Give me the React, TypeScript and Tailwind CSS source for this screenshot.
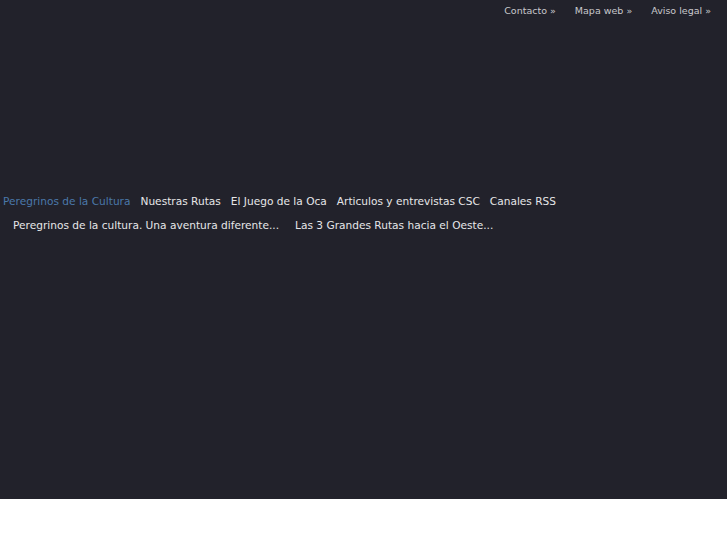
import React from "react";

export default function App() {
  const font = { fontFamily: '"DejaVu Sans", sans-serif' };
  return (
    <div className="w-[727px] h-[545px] bg-white" style={font}>
      <div className="h-[499px] bg-[#22222b] flex flex-col">
        <div className="flex justify-end gap-[19px] pr-[16px] pt-[5px] text-[9.5px] leading-[12px] text-[#c8c8cc]">
          <span>Contacto »</span>
          <span>Mapa web »</span>
          <span>Aviso legal »</span>
        </div>
        <div className="mt-[177px] flex pl-[3px] gap-[10px] text-[10.6px] leading-[14px] text-[#e6e6e8]">
          <span className="text-[#4a78aa]">Peregrinos de la Cultura</span>
          <span>Nuestras Rutas</span>
          <span>El Juego de la Oca</span>
          <span>Articulos y entrevistas CSC</span>
          <span>Canales RSS</span>
        </div>
        <div className="mt-[10px] flex pl-[13px] gap-[16px] text-[10.6px] leading-[14px] text-[#e6e6e8]">
          <span>Peregrinos de la cultura. Una aventura diferente...</span>
          <span>Las 3 Grandes Rutas hacia el Oeste...</span>
        </div>
      </div>
    </div>
  );
}
